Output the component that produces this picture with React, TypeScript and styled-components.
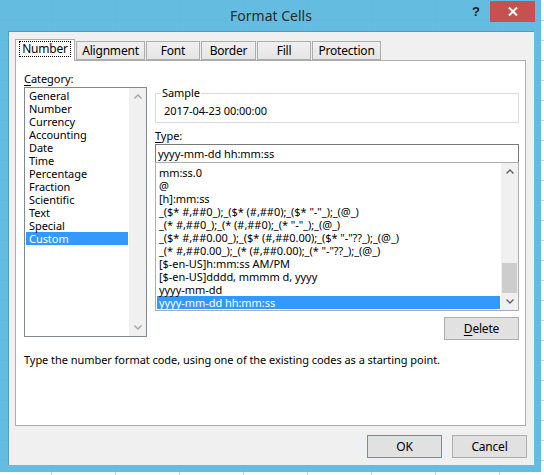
import React from "react";
import styled, { createGlobalStyle } from "styled-components";

const GlobalStyle = createGlobalStyle`
  html, body {
    margin: 0;
    padding: 0;
    background-color: #ffffff;
    background-image:
      repeating-linear-gradient(to right, transparent 0, transparent 51px, #d4d4d4 51px, #d4d4d4 52px, transparent 52px, transparent 64px),
      repeating-linear-gradient(to bottom, transparent 0, transparent 19px, #d4d4d4 19px, #d4d4d4 20px);
    background-position: 0 0, 0 1px;
    font-family: "Noto Sans", "Open Sans", sans-serif;
    font-size: 11px;
    letter-spacing: -0.05px;
    color: #000;
  }
`;

const categories = [
  "General",
  "Number",
  "Currency",
  "Accounting",
  "Date",
  "Time",
  "Percentage",
  "Fraction",
  "Scientific",
  "Text",
  "Special",
  "Custom",
];

const types = [
  "mm:ss.0",
  "@",
  "[h]:mm:ss",
  '_($* #,##0_);_($* (#,##0);_($* "-"_);_(@_)',
  '_(* #,##0_);_(* (#,##0);_(* "-"_);_(@_)',
  '_($* #,##0.00_);_($* (#,##0.00);_($* "-"??_);_(@_)',
  '_(* #,##0.00_);_(* (#,##0.00);_(* "-"??_);_(@_)',
  "[$-en-US]h:mm:ss AM/PM",
  "[$-en-US]dddd, mmmm d, yyyy",
  "yyyy-mm-dd",
  "yyyy-mm-dd hh:mm:ss",
];

const tabs = [
  { label: "Number", width: 60 },
  { label: "Alignment", width: 69 },
  { label: "Font", width: 54 },
  { label: "Border", width: 55 },
  { label: "Fill", width: 54 },
  { label: "Protection", width: 69 },
];

const Window = styled.div`
  width: 541px;
  height: 472px;
  box-sizing: border-box;
  background: rgba(88, 184, 222, 0.93);
  padding: 0 7px 7px 8px;
  display: flex;
  flex-direction: column;
  position: relative;
`;

const TitleBar = styled.div`
  height: 31px;
  display: flex;
  align-items: center;
  justify-content: center;
  font-size: 14px;
  letter-spacing: 0;
  color: #2a2a2a;
  padding-bottom: 1px;
  box-sizing: border-box;
`;

const HelpGlyph = styled.span`
  position: absolute;
  left: 472px;
  top: 4px;
  font-size: 13px;
  font-weight: bold;
  color: #1a1a1a;
  font-family: "Liberation Sans", sans-serif;
`;

const CloseButton = styled.div`
  position: absolute;
  left: 490px;
  top: 1px;
  width: 45px;
  height: 21px;
  background: #c75050;
  display: flex;
  align-items: center;
  justify-content: center;
`;

const Body = styled.div`
  flex: 1;
  background: #f0f0f0;
  border: 1px solid #4d9ec2;
  border-width: 1px 0 0 1px;
  display: flex;
  flex-direction: column;
  padding: 7px 0 0 6px;
`;

const TabRow = styled.div`
  display: flex;
  align-items: flex-end;
  height: 21px;
  position: relative;
  z-index: 1;
`;

const Tab = styled.div<{ $w: number; $active?: boolean }>`
  width: ${(p) => p.$w}px;
  box-sizing: border-box;
  height: ${(p) => (p.$active ? 22 : 19)}px;
  margin-right: 1px;
  border: 1px solid #acacac;
  border-bottom: ${(p) => (p.$active ? "none" : "1px solid #acacac")};
  background: ${(p) => (p.$active ? "#ffffff" : "linear-gradient(#f0f0f0, #e5e5e5)")};
  display: flex;
  align-items: center;
  justify-content: center;
  padding-bottom: ${(p) => (p.$active ? 3 : 0)}px;
  margin-bottom: ${(p) => (p.$active ? -1 : 0)}px;
  font-size: 12px;
  letter-spacing: -0.2px;
`;

const FocusLabel = styled.span<{ $focus?: boolean }>`
  padding: 0 2px;
  line-height: 14px;
  outline: ${(p) => (p.$focus ? "1px dotted #000" : "none")};
`;

const Panel = styled.div`
  width: 511px;
  height: 366px;
  box-sizing: border-box;
  background: #ffffff;
  border: 1px solid #acacac;
  display: grid;
  grid-template-columns: 123px 364px;
  grid-template-rows: auto auto;
  column-gap: 8px;
  padding: 0 0 0 8px;
  align-content: start;
`;

const LeftCol = styled.div`
  display: flex;
  flex-direction: column;
  padding-top: 10px;
`;

const RightCol = styled.div`
  display: flex;
  flex-direction: column;
  padding-top: 25px;
`;

const Label = styled.div`
  line-height: 15px;
  height: 15px;
  margin-bottom: 1px;
`;

const Key = styled.span`
  text-decoration: underline;
  text-underline-offset: 2px;
`;

const ListBox = styled.div<{ $h: number }>`
  height: ${(p) => p.$h}px;
  box-sizing: border-box;
  border: 1px solid #828790;
  display: flex;
  background: #fff;
`;

const Items = styled.div<{ $pt: number }>`
  flex: 1;
  overflow: hidden;
  padding: ${(p) => p.$pt}px 1px 0 1px;
`;

const Item = styled.div<{ $sel?: boolean; $indent: number }>`
  height: 13px;
  line-height: 13px;
  white-space: pre;
  padding-left: ${(p) => p.$indent}px;
  background: ${(p) => (p.$sel ? "#3399ff" : "transparent")};
  color: ${(p) => (p.$sel ? "#ffffff" : "#000000")};
`;

const ScrollTrack = styled.div`
  width: 17px;
  background: #f0f0f0;
  display: flex;
  flex-direction: column;
  align-items: center;
`;

const ArrowBox = styled.div`
  height: 17px;
  width: 17px;
  display: flex;
  align-items: center;
  justify-content: center;
`;

const Track = styled.div`
  flex: 1;
  width: 15px;
  display: flex;
  flex-direction: column;
  justify-content: flex-end;
`;

const Thumb = styled.div<{ $h: number; $bottom: number }>`
  height: ${(p) => p.$h}px;
  margin-bottom: ${(p) => p.$bottom}px;
  background: #cdcdcd;
`;

const Group = styled.fieldset`
  margin: 0;
  min-width: 0;
  border: 1px solid #dcdcdc;
  padding: 4px 5px 4px 5px;
`;

const Legend = styled.legend`
  padding: 0 1px;
  line-height: 14px;
`;

const SampleValue = styled.div`
  line-height: 14px;
  padding-left: 3px;
`;

const TypeLabel = styled(Label)`
  margin-top: 5px;
`;

const TextBox = styled.div`
  height: 19px;
  box-sizing: border-box;
  border: 1px solid #7a7a7a;
  line-height: 17px;
  padding-left: 2px;
  border-bottom-color: #abadb3;
`;

const TypeList = styled(ListBox)`
  margin-top: -1px;
  border-color: #abadb3;
`;

const ButtonRow = styled.div<{ $pr: number; $mt: number }>`
  display: flex;
  justify-content: flex-end;
  gap: 10px;
  padding-right: ${(p) => p.$pr}px;
  margin-top: ${(p) => p.$mt}px;
`;

const Button = styled.div<{ $default?: boolean }>`
  width: 75px;
  height: 23px;
  box-sizing: border-box;
  border: 1px solid ${(p) => (p.$default ? "#3c9ae8" : "#adadad")};
  background: #e1e1e1;
  display: flex;
  align-items: center;
  justify-content: center;
  padding-bottom: 1px;
  font-size: 12px;
  letter-spacing: -0.2px;
`;

const Hint = styled.div`
  grid-column: 1 / span 2;
  margin-top: 12px;
  line-height: 15px;
  white-space: nowrap;
`;

const Chevron = ({ up, color }: { up?: boolean; color: string }) => (
  <svg width="8" height="5" viewBox="0 0 8 5">
    <polyline
      points={up ? "0.5,4.5 4,1 7.5,4.5" : "0.5,0.5 4,4 7.5,0.5"}
      fill="none"
      stroke={color}
      strokeWidth="1.4"
    />
  </svg>
);

const ScrollBar = ({ color, thumb }: { color: string; thumb?: boolean }) => (
  <ScrollTrack>
    <ArrowBox>
      <Chevron up color={color} />
    </ArrowBox>
    <Track>{thumb && <Thumb $h={30} $bottom={0} />}</Track>
    <ArrowBox>
      <Chevron color={color} />
    </ArrowBox>
  </ScrollTrack>
);

export default function App() {
  return (
    <>
      <GlobalStyle />
      <Window>
        <TitleBar>Format Cells</TitleBar>
        <HelpGlyph>?</HelpGlyph>
        <CloseButton>
          <svg width="10" height="9" viewBox="0 0 10 9">
            <path d="M1 0.5 L9 8.5 M9 0.5 L1 8.5" stroke="#fff" strokeWidth="2" />
          </svg>
        </CloseButton>
        <Body>
          <TabRow>
            {tabs.map((t, i) => (
              <Tab key={t.label} $w={t.width} $active={i === 0}>
                <FocusLabel $focus={i === 0}>{t.label}</FocusLabel>
              </Tab>
            ))}
          </TabRow>
          <Panel>
            <LeftCol>
              <Label>
                <Key>C</Key>ategory:
              </Label>
              <ListBox $h={250}>
                <Items $pt={1}>
                  {categories.map((c) => (
                    <Item key={c} $indent={3} $sel={c === "Custom"}>
                      {c}
                    </Item>
                  ))}
                </Items>
                <ScrollBar color="#a3a3a3" />
              </ListBox>
            </LeftCol>
            <RightCol>
              <Group>
                <Legend>Sample</Legend>
                <SampleValue>2017-04-23 00:00:00</SampleValue>
              </Group>
              <TypeLabel>
                <Key>T</Key>ype:
              </TypeLabel>
              <TextBox>yyyy-mm-dd hh:mm:ss</TextBox>
              <TypeList $h={149}>
                <Items $pt={3}>
                  {types.map((t) => (
                    <Item key={t} $indent={2} $sel={t === "yyyy-mm-dd hh:mm:ss"}>
                      {t}
                    </Item>
                  ))}
                </Items>
                <ScrollBar color="#606060" thumb />
              </TypeList>
              <ButtonRow $pr={0} $mt={6}>
                <Button>
                  <span>
                    <Key>D</Key>elete
                  </span>
                </Button>
              </ButtonRow>
            </RightCol>
            <Hint>Type the number format code, using one of the existing codes as a starting point.</Hint>
          </Panel>
          <ButtonRow $pr={7} $mt={9}>
            <Button $default>OK</Button>
            <Button>Cancel</Button>
          </ButtonRow>
        </Body>
      </Window>
    </>
  );
}
